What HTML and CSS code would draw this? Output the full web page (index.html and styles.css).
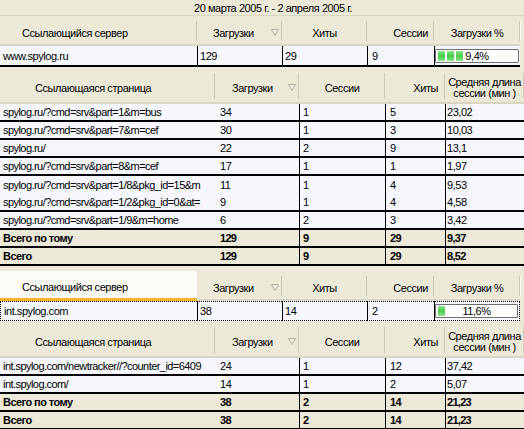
FILE: index.html
```html
<!DOCTYPE html>
<html lang="ru">
<head>
<meta charset="utf-8">
<title>Ссылающиеся серверы</title>
<link rel="stylesheet" href="styles.css">
</head>
<body>
<div class="title">20 марта 2005 г. - 2 апреля 2005 г.</div>

<table class="srv">
  <colgroup><col class="w197"><col class="w85"><col class="w85"><col class="w67"><col class="w86"></colgroup>
  <thead>
    <tr class="hrow">
      <th class="hs1">Ссылающийся сервер</th>
      <th class="hsort hs2"><span>Загрузки</span><svg class="arrow" width="8" height="7" viewBox="0 0 8 7"><polygon points="0.5,0.5 7.5,0.5 4,6.5" fill="#efeee6" stroke="#b3b19e"/></svg></th>
      <th class="center">Хиты</th>
      <th class="right">Сессии</th>
      <th class="center">Загрузки %</th>
    </tr>
  </thead>
  <tbody>
    <tr class="srow">
      <td class="p3">www.spylog.ru</td>
      <td class="bl p2">129</td>
      <td class="bl p2">29</td>
      <td class="bl p4">9</td>
      <td class="bl pbar"><div class="bar"><div class="chunks"><i></i><i></i><i></i></div><span class="pct">9,4%</span></div></td>
    </tr>
  </tbody>
</table>

<table class="pages">
  <colgroup><col class="w215"><col class="w84"><col class="w86"><col class="w60"><col class="w79"></colgroup>
  <thead>
    <tr class="hrow2">
      <th class="hp1">Ссылающаяся страница</th>
      <th class="hsort hp2"><span>Загрузки</span><svg class="arrow" width="8" height="7" viewBox="0 0 8 7"><polygon points="0.5,0.5 7.5,0.5 4,6.5" fill="#efeee6" stroke="#b3b19e"/></svg></th>
      <th class="center">Сессии</th>
      <th class="right r7">Хиты</th>
      <th class="center two">Средняя длина<br>сессии (мин )</th>
    </tr>
  </thead>
  <tbody>
    <tr class="prow"><td class="p3">spylog.ru/?cmd=srv&amp;part=1&amp;m=bus</td><td class="p6">34</td><td class="bl p3">1</td><td class="bl p4">5</td><td class="bl p1">23,02</td></tr>
    <tr class="prow"><td class="p3">spylog.ru/?cmd=srv&amp;part=7&amp;m=cef</td><td class="p6">30</td><td class="bl p3">1</td><td class="bl p4">3</td><td class="bl p1">10,03</td></tr>
    <tr class="prow"><td class="p3">spylog.ru/</td><td class="p6">22</td><td class="bl p3">2</td><td class="bl p4">9</td><td class="bl p1">13,1</td></tr>
    <tr class="prow"><td class="p3">spylog.ru/?cmd=srv&amp;part=8&amp;m=cef</td><td class="p6">17</td><td class="bl p3">1</td><td class="bl p4">1</td><td class="bl p1">1,97</td></tr>
    <tr class="prow nb"><td class="p3">spylog.ru/?cmd=srv&amp;part=1/8&amp;pkg_id=15&amp;m</td><td class="p6">11</td><td class="bl p3">1</td><td class="bl p4">4</td><td class="bl p1">9,53</td></tr>
    <tr class="prow"><td class="p3">spylog.ru/?cmd=srv&amp;part=1/2&amp;pkg_id=0&amp;at=</td><td class="p6">9</td><td class="bl p3">1</td><td class="bl p4">4</td><td class="bl p1">4,58</td></tr>
    <tr class="prow"><td class="p3">spylog.ru/?cmd=srv&amp;part=1/9&amp;m=home</td><td class="p6">6</td><td class="bl p3">2</td><td class="bl p4">3</td><td class="bl p1">3,42</td></tr>
    <tr class="prow total"><td class="p3">Всего по тому</td><td class="p6">129</td><td class="bl p3">9</td><td class="bl p4">29</td><td class="bl p1">9,37</td></tr>
    <tr class="prow total"><td class="p3">Всего</td><td class="p6">129</td><td class="bl p3">9</td><td class="bl p4">29</td><td class="bl p1">8,52</td></tr>
  </tbody>
</table>

<table class="srv second">
  <colgroup><col class="w197"><col class="w85"><col class="w85"><col class="w67"><col class="w86"></colgroup>
  <thead>
    <tr class="hrow">
      <th class="hs1 hover">Ссылающийся сервер</th>
      <th class="hsort hs2"><span>Загрузки</span><svg class="arrow" width="8" height="7" viewBox="0 0 8 7"><polygon points="0.5,0.5 7.5,0.5 4,6.5" fill="#efeee6" stroke="#b3b19e"/></svg></th>
      <th class="center">Хиты</th>
      <th class="right">Сессии</th>
      <th class="center">Загрузки %</th>
    </tr>
  </thead>
  <tbody>
    <tr class="srow focus">
      <td class="p3 fl">int.spylog.com</td>
      <td class="bl p2">38</td>
      <td class="bl p2">14</td>
      <td class="bl p4">2</td>
      <td class="bl pbar fr"><div class="bar"><div class="chunks"><i></i></div><span class="pct">11,6%</span></div></td>
    </tr>
  </tbody>
</table>

<table class="pages">
  <colgroup><col class="w215"><col class="w84"><col class="w86"><col class="w60"><col class="w79"></colgroup>
  <thead>
    <tr class="hrow2">
      <th class="hp1">Ссылающаяся страница</th>
      <th class="hsort hp2"><span>Загрузки</span><svg class="arrow" width="8" height="7" viewBox="0 0 8 7"><polygon points="0.5,0.5 7.5,0.5 4,6.5" fill="#efeee6" stroke="#b3b19e"/></svg></th>
      <th class="center">Сессии</th>
      <th class="right r7">Хиты</th>
      <th class="center two">Средняя длина<br>сессии (мин )</th>
    </tr>
  </thead>
  <tbody>
    <tr class="prow"><td class="p3">int.spylog.com/newtracker//?counter_id=6409</td><td class="p6">24</td><td class="bl p3">1</td><td class="bl p4">12</td><td class="bl p1">37,42</td></tr>
    <tr class="prow"><td class="p3">int.spylog.com/</td><td class="p6">14</td><td class="bl p3">1</td><td class="bl p4">2</td><td class="bl p1">5,07</td></tr>
    <tr class="prow total"><td class="p3">Всего по тому</td><td class="p6">38</td><td class="bl p3">2</td><td class="bl p4">14</td><td class="bl p1">21,23</td></tr>
    <tr class="prow total"><td class="p3">Всего</td><td class="p6">38</td><td class="bl p3">2</td><td class="bl p4">14</td><td class="bl p1">21,23</td></tr>
  </tbody>
</table>
</body>
</html>
```

FILE: styles.css
```css
html, body {
  margin: 0;
  padding: 0;
}
body {
  background: #ece9d8;
  color: #000;
  font-family: "Liberation Sans", Arial, sans-serif;
  font-size: 11px;
  letter-spacing: -0.45px;
  width: 524px;
  overflow: hidden;
}

.title {
  height: 15px;
  line-height: 16px;
  padding-left: 194px;
  border-bottom: 1px solid #d9d6c4;
  white-space: nowrap;
}

table {
  border-collapse: separate;
  border-spacing: 0;
  table-layout: fixed;
}
.srv { width: 520px; margin-bottom: 1px; }
.srv.second { margin-top: 5px; }
.pages { width: 524px; }

.w197 { width: 197px; }
.w85 { width: 85px; }
.w67 { width: 67px; }
.w86 { width: 86px; }
.w215 { width: 215px; }
.w84 { width: 84px; }
.w60 { width: 60px; }
.w79 { width: 79px; }

/* headers */
th {
  position: relative;
  font-weight: normal;
  text-align: left;
  white-space: nowrap;
  padding: 5px 0 0 0;
  vertical-align: middle;
  border-bottom: 2px solid #d8d5c3;
  background: #ece9d8;
}
th::after {
  content: "";
  position: absolute;
  right: 0;
  top: 5px;
  bottom: 3px;
  width: 1px;
  background: #cdcab8;
  box-shadow: 1px 0 0 #fbfaf5;
}
.hrow { height: 30px; }
.hrow2 { height: 36px; }

.hs1 { padding-left: 22px; }
.hp1 { padding-left: 35px; }
.center { text-align: center; }
.right { text-align: right; padding-right: 6px; }
.right.r7 { padding-right: 7px; }
.two { line-height: 11px; padding-top: 6px; }

.hsort span { display: inline-block; }
.hs2 { padding-left: 16px; }
.hp2 { padding-left: 17px; }
.hsort .arrow {
  position: absolute;
  right: 3px;
  top: 13px;
}
.hrow2 .hsort .arrow { top: 16px; }

th.hover {
  background: #fbfaf5;
  border-bottom: 3px solid #f8b22b;
}
th.hover::after { display: none; }

/* data cells */
td {
  white-space: nowrap;
  overflow: hidden;
  padding: 0;
  vertical-align: middle;
}
.srow { height: 21px; }
.srow td {
  background: #f5f7fc;
  border-bottom: 2px solid #000;
}
.prow { height: 18px; }
.prow td {
  background: #f5f7fc;
  border-bottom: 2px solid #000;
}
.prow td.p3:first-child { letter-spacing: -0.55px; }
.prow.nb td { border-bottom: 0; }
.prow.total td {
  background: #ece9d8;
  font-weight: bold;
  letter-spacing: -0.7px;
}

.bl { border-left: 1px solid #000; }
.p1 { padding-left: 1px; }
.p2 { padding-left: 2px; }
.p3 { padding-left: 3px; }
.p4 { padding-left: 4px; }
.p6 { padding-left: 5px; }

/* progress bar */
.pbar { padding: 0 1px 0 0; }
.bar {
  display: grid;
  height: 12px;
  border: 1px solid #6e6e6e;
  border-radius: 1px;
  background: #fdfdfb;
}
.chunks {
  grid-area: 1 / 1;
  display: flex;
  gap: 2px;
  padding: 1px 2px;
}
.chunks i {
  display: block;
  width: 7px;
  background: linear-gradient(#8ee58e, #4fcf4f 40%, #4fcf4f 60%, #8ee58e);
}
.pct {
  grid-area: 1 / 1;
  justify-self: center;
  line-height: 12px;
}

/* focused row */
.focus td {
  border-top: 1px dotted #000;
  border-bottom: 1px dotted #000;
}
.focus { height: 20px; }
.focus td.fl { border-left: 1px dotted #000; }
.focus td.fr { border-right: 1px dotted #000; }
```
